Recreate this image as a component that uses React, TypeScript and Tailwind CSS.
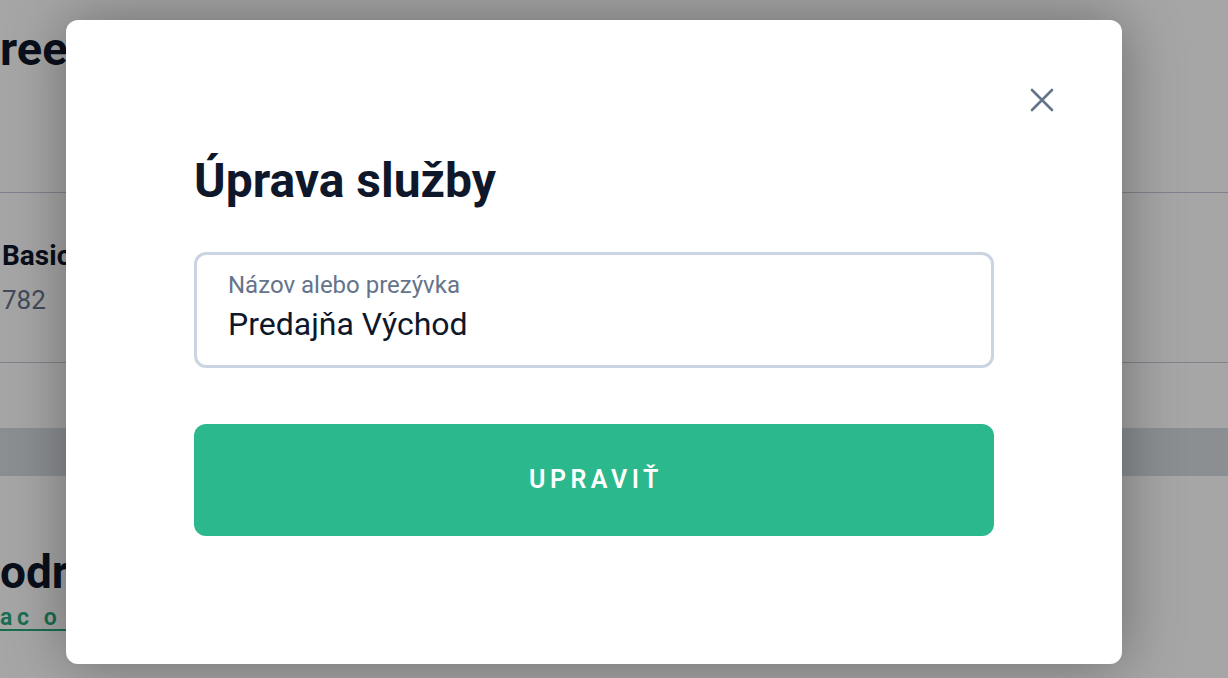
import React from "react";

export default function App() {
  return (
    <div className="relative h-[678px] w-full overflow-hidden bg-white" style={{ fontFamily: "Roboto, 'Noto Sans', sans-serif" }}>
      {/* underlying page */}
      <div className="flex flex-col">
        <div className="h-[193px] border-b border-[#c2cad6] pt-[20px]">
          <h1 className="text-[47px] font-bold leading-[58px] text-[#0f172a]">reen</h1>
        </div>
        <div className="flex h-[170px] flex-col justify-center border-b border-[#c2cad6] pl-[2px] pb-[2px]">
          <div className="text-[28px] font-bold leading-[34px] text-[#0f172a]">Basic plán</div>
          <div className="mt-[12px] text-[26px] leading-[30px] text-[#64748b]">782</div>
        </div>
        <div className="h-[65px]" />
        <div className="h-[48px] bg-[#d8dce1]" />
        <div className="pt-[70px]">
          <h2 className="text-[46px] font-bold leading-[52px] text-[#0f172a]">odr</h2>
          <a className="mt-[6px] inline-block text-[23px] font-semibold leading-[28px] tracking-[0.2em] text-[#27a87a] underline decoration-2 underline-offset-4">ac o podmienkach</a>
        </div>
      </div>

      {/* overlay */}
      <div className="absolute inset-0 bg-black/35">
        <div className="absolute left-[66px] top-[20px] h-[644px] w-[1056px] rounded-xl bg-white shadow-[0_0_60px_rgba(0,0,0,0.35)]">
          <button className="absolute right-[66px] top-[66px] flex h-[28px] w-[28px] items-center justify-center text-[#64748b]">
            <svg width="24" height="24" viewBox="0 0 24 24" fill="none" stroke="currentColor" strokeWidth="2.6" strokeLinecap="round">
              <path d="M2 2 L22 22 M22 2 L2 22" />
            </svg>
          </button>
          <div className="flex flex-col px-[128px] pt-[132px]">
            <h2 className="text-[48px] font-bold leading-[58px] text-[#0f172a]">Úprava služby</h2>
            <div className="mt-[42px] flex h-[116px] w-[800px] flex-col justify-center rounded-xl border-[3px] border-[#cbd5e1] px-[31px] pb-[6px]">
              <label className="text-[24px] leading-[28px] text-[#64748b]">Názov alebo prezývka</label>
              <div className="mt-[6px] text-[32px] leading-[38px] text-[#0f172a]">Predajňa Východ</div>
            </div>
            <button className="mt-[56px] flex h-[112px] w-[800px] items-center justify-center rounded-xl bg-[#2bb88c] pl-[4px] text-[25px] font-semibold tracking-[0.18em] text-white">
              UPRAVIŤ
            </button>
          </div>
        </div>
      </div>
    </div>
  );
}
